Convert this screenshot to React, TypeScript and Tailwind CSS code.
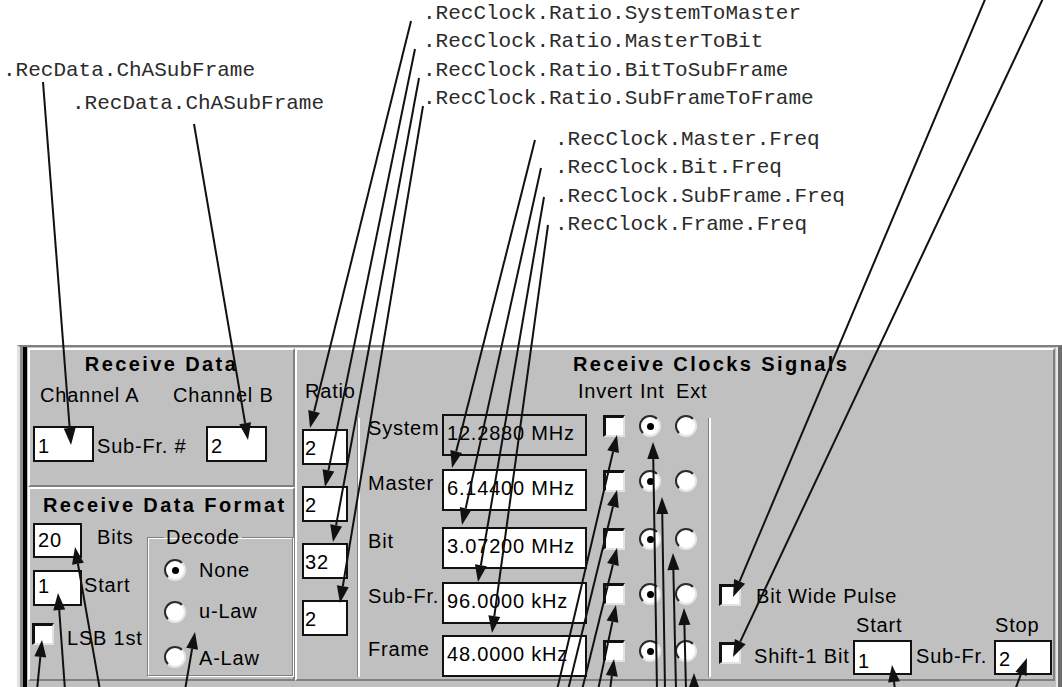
import React from "react";

const ui =
  "font-['Liberation_Sans',Arial,sans-serif] text-[20px] leading-[20px] tracking-[0.8px] text-black whitespace-nowrap";
const bold =
  "font-['Liberation_Sans',Arial,sans-serif] font-bold text-[20px] leading-[20px] tracking-[2.4px] text-black whitespace-nowrap";

function Input({ value, className }: { value: string; className: string }) {
  return (
    <div className={`bg-white border-2 border-[#111] shrink-0 ${className}`}>
      <div className={ui}>{value}</div>
    </div>
  );
}

function Check({ className = "" }: { className?: string }) {
  return (
    <div
      className={`w-[22px] h-[22px] shrink-0 bg-white border-t-[3px] border-l-[3px] border-t-[#111] border-l-[#111] border-b-2 border-r-2 border-b-[#e2e2e2] border-r-[#e2e2e2] ${className}`}
    />
  );
}

function Radio({ on = false, className = "" }: { on?: boolean; className?: string }) {
  return (
    <div
      className={`w-[22px] h-[22px] shrink-0 rounded-full bg-white border-2 border-t-[#2a2a2a] border-l-[#2a2a2a] border-b-[#e6e6e6] border-r-[#e6e6e6] flex items-center justify-center ${className}`}
    >
      {on && <div className="w-[7px] h-[7px] rounded-full bg-black" />}
    </div>
  );
}

function Etched() {
  return <div className="self-start mt-[4px] h-[259px] w-[3px] shrink-0 border-l border-l-[#808080] bg-white" />;
}

const rows = [
  { label: "System", val: "12.2880 MHz", mt: "mt-0", grey: true, ctrl: "mt-px" },
  { label: "Master", val: "6.14400 MHz", mt: "mt-[13px]", grey: false, ctrl: "mt-px" },
  { label: "Bit", val: "3.07200 MHz", mt: "mt-[16px]", grey: false, ctrl: "mt-px" },
  { label: "Sub-Fr.", val: "96.0000 kHz", mt: "mt-[13px]", grey: false, ctrl: "mt-px" },
  { label: "Frame", val: "48.0000 kHz", mt: "mt-[11px]", grey: false, ctrl: "mt-[5px]" },
];

function Labels() {
  return (
    <div className="relative h-[345px] font-['Liberation_Mono','Courier_New',monospace] text-[21px] leading-[21px] text-[#2b2b2b] whitespace-pre">
      <div className="absolute left-[3px] top-[60px]">.RecData.ChASubFrame</div>
      <div className="absolute left-[72px] top-[93px]">.RecData.ChASubFrame</div>
      <div className="absolute left-[423px] top-[3px]">.RecClock.Ratio.SystemToMaster</div>
      <div className="absolute left-[423px] top-[31px]">.RecClock.Ratio.MasterToBit</div>
      <div className="absolute left-[423px] top-[60px]">.RecClock.Ratio.BitToSubFrame</div>
      <div className="absolute left-[423px] top-[88px]">.RecClock.Ratio.SubFrameToFrame</div>
      <div className="absolute left-[555px] top-[129px]">.RecClock.Master.Freq</div>
      <div className="absolute left-[555px] top-[157px]">.RecClock.Bit.Freq</div>
      <div className="absolute left-[555px] top-[186px]">.RecClock.SubFrame.Freq</div>
      <div className="absolute left-[555px] top-[214px]">.RecClock.Frame.Freq</div>
    </div>
  );
}

function LeftGroup() {
  return (
    <div className="w-[267px] h-[333px] flex flex-col shrink-0">
      <div className="h-[139px] border-2 border-white border-r-[#808080] border-b-[#808080] flex flex-col">
        <div className={`${bold} mt-[4px] text-center`}>Receive Data</div>
        <div className={`flex mt-[11px] ${ui}`}>
          <span className="ml-[10px] w-[133px]">Channel A</span>
          <span>Channel B</span>
        </div>
        <div className="flex items-start mt-[21px]">
          <Input value="1" className="ml-[3px] w-[61px] h-[36px] pl-[3px] pt-[8px]" />
          <span className={`${ui} ml-[3px] mt-[10px] w-[109px]`}>Sub-Fr. #</span>
          <Input value="2" className="w-[61px] h-[36px] pl-[3px] pt-[8px]" />
        </div>
      </div>
      <div className="h-[194px] border-2 border-white border-r-[#808080] border-b-[#808080] flex flex-col">
        <div className={`${bold} mt-[6px] ml-[13px]`}>Receive Data Format</div>
        <div className="flex items-start">
          <div className="w-[117px] flex flex-col shrink-0">
            <div className="flex items-start mt-[8px]">
              <Input value="20" className="ml-[3px] w-[49px] h-[35px] pl-[3px] pt-[5px]" />
              <span className={`${ui} ml-[15px] mt-[4px]`}>Bits</span>
            </div>
            <div className="flex items-start mt-[12px]">
              <Input value="1" className="ml-[3px] w-[49px] h-[36px] pl-[3px] pt-[4px]" />
              <span className={`${ui} ml-[2px] mt-[5px]`}>Start</span>
            </div>
            <div className="flex items-start mt-[17px]">
              <Check className="ml-[2px]" />
              <span className={`${ui} ml-[13px] mt-[5px]`}>LSB 1st</span>
            </div>
          </div>
          <fieldset className="mt-[12px] w-[146px] h-[149px] border border-[#808080] shadow-[inset_1px_1px_0_#fff,1px_1px_0_#fff]">
            <legend className={`${ui} ml-[16px] px-[2px]`}>Decode</legend>
            <div className="flex items-start ml-[16px] mt-[12px]">
              <Radio on />
              <span className={`${ui} ml-[13px] mt-px`}>None</span>
            </div>
            <div className="flex items-start ml-[16px] mt-[20px]">
              <Radio />
              <span className={`${ui} ml-[13px]`}>u-Law</span>
            </div>
            <div className="flex items-start ml-[16px] mt-[23px]">
              <Radio />
              <span className={`${ui} ml-[13px] mt-[2px]`}>A-Law</span>
            </div>
          </fieldset>
        </div>
      </div>
    </div>
  );
}

function RightGroup() {
  return (
    <div className="flex-1 h-[333px] border-2 border-white border-r-[#808080] border-b-[#808080] flex flex-col">
      <div className={`${bold} mt-[4px] ml-[276px]`}>Receive Clocks Signals</div>
      <div className={`flex mt-[7px] ${ui}`}>
        <div className="w-[281px] pl-[8px]">Ratio</div>
        <div className="w-[62px]">Invert</div>
        <div className="w-[36px]">Int</div>
        <div>Ext</div>
      </div>
      <div className="flex mt-[13px] flex-1">
        <div className="w-[60px] shrink-0 flex flex-col gap-[21px] pt-[15px] pl-[5px]">
          {["2", "2", "32", "2"].map((v, i) => (
            <Input key={i} value={v} className="w-[46px] h-[36px] pl-px pt-[7px]" />
          ))}
        </div>
        <Etched />
        <div className="flex flex-col shrink-0">
          {rows.map((r) => (
            <div key={r.label} className={`flex items-start ${r.mt}`}>
              <div className={`${ui} w-[82px] pl-[8px] pt-[4px]`}>{r.label}</div>
              <Input
                value={r.val}
                className={`w-[145px] h-[42px] pl-[3px] pt-[7px] ${r.grey ? "!bg-[#c0c0c0]" : ""}`}
              />
              <Check className={`ml-[16px] ${r.ctrl}`} />
              <Radio on className={`ml-[14px] ${r.ctrl}`} />
              <Radio className={`ml-[14px] ${r.ctrl}`} />
            </div>
          ))}
        </div>
        <div className="ml-[11px] flex">
          <Etched />
        </div>
        <div className="flex-1 flex flex-col justify-end pb-[4px]">
          <div className="flex items-start">
            <Check className="ml-[8px]" />
            <span className={`${ui} ml-[15px] mt-[2px]`}>Bit Wide Pulse</span>
          </div>
          <div className={`flex mt-[9px] pl-[145px] ${ui}`}>
            <span className="w-[139px]">Start</span>
            <span>Stop</span>
          </div>
          <div className="flex items-start mt-[5px]">
            <Check className="ml-[8px] mt-[2px]" />
            <span className={`${ui} ml-[13px] mt-[6px] w-[99px]`}>Shift-1 Bit</span>
            <Input value="1" className="w-[59px] h-[35px] pl-[3px] pt-[9px]" />
            <span className={`${ui} ml-[4px] mt-[6px] w-[78px]`}>Sub-Fr.</span>
            <Input value="2" className="w-[58px] h-[35px] pl-[3px] pt-[7px]" />
          </div>
        </div>
      </div>
    </div>
  );
}

function Panel() {
  return (
    <div className="ml-[17px] w-[1045px] h-[342px] bg-[#c0c0c0] border-t-2 border-t-[#808080] border-l-[3px] border-l-[#e2e2e2] border-r-4 border-r-[#6c6c6c] flex">
      <div className="flex-1 flex border-l-[3px] border-l-[#8c8c8c]">
        <div className="flex-1 flex items-start border-l-4 border-l-black pl-px pt-px pr-px border-r-2 border-r-[#e6e6e6]">
          <LeftGroup />
          <RightGroup />
        </div>
      </div>
    </div>
  );
}

const arrows: [number, number, number, number][] = [
  [43, 82, 71, 445],
  [194, 124, 248, 440],
  [411, 21, 310, 428],
  [415, 49, 325, 487],
  [419, 78, 333, 542],
  [423, 106, 340, 603],
  [535, 140, 452, 468],
  [541, 168, 462, 525],
  [544, 197, 478, 582],
  [548, 225, 492, 633],
  [989, -10, 733, 597],
  [1047, -10, 733, 657],
  [37, 690, 42, 640],
  [65, 690, 58, 593],
  [100, 690, 75, 547],
  [185, 690, 195, 632],
  [557, 690, 617, 435],
  [568, 690, 617, 490],
  [582, 690, 617, 548],
  [598, 690, 616, 605],
  [610, 690, 614, 659],
  [657, 690, 653, 442],
  [665, 690, 662, 497],
  [676, 690, 673, 553],
  [686, 690, 684, 608],
  [694, 690, 694, 673],
  [895, 690, 892, 665],
  [1015, 690, 1027, 658],
];

function head(x1: number, y1: number, x2: number, y2: number, L = 17, W = 6) {
  const dx = x2 - x1;
  const dy = y2 - y1;
  const len = Math.hypot(dx, dy);
  const ux = dx / len;
  const uy = dy / len;
  const bx = x2 - ux * L;
  const by = y2 - uy * L;
  const nx = -uy;
  const ny = ux;
  return {
    pts: `${x2},${y2} ${bx + nx * W},${by + ny * W} ${bx - nx * W},${by - ny * W}`,
    bx,
    by,
  };
}

function Overlay() {
  return (
    <svg className="absolute left-0 top-0 pointer-events-none" width={1062} height={687} viewBox="0 0 1062 687">
      {arrows.map(([x1, y1, x2, y2], i) => {
        const h = head(x1, y1, x2, y2);
        return (
          <g key={i}>
            <line x1={x1} y1={y1} x2={h.bx} y2={h.by} stroke="#111" strokeWidth={2} />
            <polygon points={h.pts} fill="#111" />
          </g>
        );
      })}
    </svg>
  );
}

export default function App() {
  return (
    <div className="relative w-[1062px] h-[687px] overflow-hidden bg-white">
      <Labels />
      <Panel />
      <Overlay />
    </div>
  );
}
